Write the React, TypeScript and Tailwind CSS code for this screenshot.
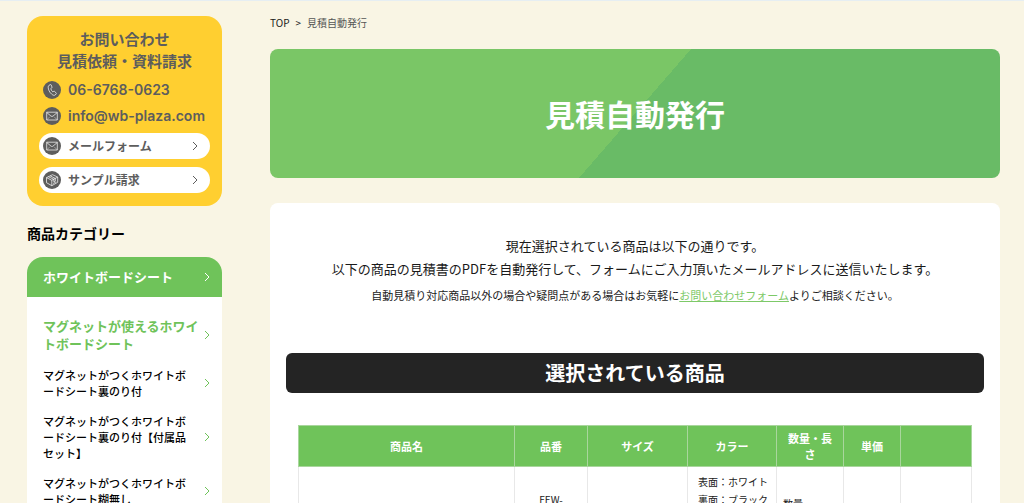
import type { ReactNode } from 'react';

const categories = [
  'マグネットがつくホワイトボードシート裏のり付',
  'マグネットがつくホワイトボードシート裏のり付【付属品セット】',
  'マグネットがつくホワイトボードシート糊無し',
];

const columns = [
  { label: '商品名', width: 'w-auto' },
  { label: '品番', width: 'w-[73px]' },
  { label: 'サイズ', width: 'w-[100px]' },
  { label: 'カラー', width: 'w-[89px]' },
  { label: '数量・長さ', width: 'w-[67px]' },
  { label: '単価', width: 'w-[57px]' },
  { label: '', width: 'w-[71px]' },
];

function Chevron({ className }: { className: string }) {
  return (
    <svg viewBox="0 0 6 10" className={`shrink-0 ${className}`} fill="none" stroke="currentColor" aria-hidden="true">
      <path d="M1 1l4 4-4 4" />
    </svg>
  );
}

function RoundIcon({ children }: { children: ReactNode }) {
  return (
    <svg viewBox="0 0 18 18" className="size-[18px] shrink-0" fill="none" stroke="#fff" strokeWidth="0.7" strokeLinejoin="round" aria-hidden="true">
      <circle cx="9" cy="9" r="9" fill="#5d5d5d" stroke="none" />
      {children}
    </svg>
  );
}

function PhoneIcon() {
  return (
    <RoundIcon>
      <path d="M6 4.3l1.400-.7c.4-.2.7 0 .8.300l.8 2.200c.1.400 0 .600-.3.800l-.9.600c.2 1.400.9 2.500 2 3.400l1-.6c.3-.2.600-.1.800.1l1.600 1.700c.2.200.2.500 0 .700l-1 1.200c-.8.700-2.200.300-3.500-.8-2.100-1.800-3.500-4.500-3.500-7 0-.9.200-1.500.8-1.900z" />
    </RoundIcon>
  );
}

function MailIcon() {
  return (
    <RoundIcon>
      <rect x="3.700" y="5.200" width="10.600" height="7.800" />
      <path d="M3.700 5.500l4.300 3.600c.6.500 1.400.5 2 0l4.300-3.600" />
      <path d="M4 12.700l2.800-2.900M14 12.700l-2.800-2.900" strokeWidth="0.4" />
    </RoundIcon>
  );
}

function BoxIcon() {
  return (
    <RoundIcon>
      <path d="M3.500 6.600L9.500 3.700l5.200 2.400v5.200l-5.900 3.400-5.300-3z" />
      <path d="M3.500 6.600l5.300 2.700 5.900-3.200M8.800 9.300v5.400M5.400 5.700l5.400 2.600v2.500l1.500-.8V7.400L7.200 4.900M10.200 12.500l3-1.700" />
    </RoundIcon>
  );
}

function ContactCard() {
  return (
    <section className="flex flex-col gap-2 rounded-2xl bg-[#ffcf30] px-3 pt-3 pb-[13px] font-bold text-[#5d5d5d]">
      <h2 className="pb-px text-center text-[15px] leading-[22px]">
        お問い合わせ
        <br />
        見積依頼・資料請求
      </h2>
      <a href="tel:06-6768-0623" className="flex items-center gap-[7px] px-1 font-[Inter,sans-serif] text-[14px] leading-[18px] font-semibold">
        <PhoneIcon />
        06-6768-0623
      </a>
      <a href="mailto:info@wb-plaza.com" className="flex items-center gap-[7px] px-1 font-[Inter,sans-serif] text-[14px] leading-[18px] font-semibold">
        <MailIcon />
        info@wb-plaza.com
      </a>
      <a href="#form" className="flex items-center gap-[7px] rounded-full bg-white py-1 pr-3 pl-1 text-[12px] leading-[18px]">
        <MailIcon />
        <span className="flex-1">メールフォーム</span>
        <Chevron className="h-[10px] w-[6px]" />
      </a>
      <a href="#sample" className="flex items-center gap-[7px] rounded-full bg-white py-1 pr-3 pl-1 text-[12px] leading-[18px]">
        <BoxIcon />
        <span className="flex-1">サンプル請求</span>
        <Chevron className="h-[10px] w-[6px]" />
      </a>
    </section>
  );
}

function CategoryNav() {
  return (
    <nav aria-labelledby="category-title">
      <h2 id="category-title" className="mt-4 mb-[13px] text-[14px] leading-[22px] font-bold text-black">
        商品カテゴリー
      </h2>
      <a href="#sheet" className="flex h-10 items-center justify-between rounded-t-2xl bg-[#6fc35a] pr-3 pl-4 text-[13px] font-bold text-white">
        ホワイトボードシート
        <Chevron className="h-[10px] w-[6px]" />
      </a>
      <ul className="flex flex-col gap-[14px] bg-white pt-5 pr-3 pb-6 pl-4">
        <li>
          <a href="#magnet" className="flex items-center justify-between text-[13px] leading-[18px] font-bold text-[#6fc35a]">
            <span className="w-[158px]">マグネットが使えるホワイトボードシート</span>
            <Chevron className="h-[10px] w-[6px]" />
          </a>
        </li>
        {categories.map((name) => (
          <li key={name}>
            <a href="#category" className="flex items-center justify-between text-[11px] leading-4 font-medium text-black">
              <span className="w-[148px] break-all">{name}</span>
              <Chevron className="h-[10px] w-[6px] text-[#6fc35a]" />
            </a>
          </li>
        ))}
      </ul>
    </nav>
  );
}

function ProductTable() {
  return (
    <table className="w-full table-fixed border-collapse text-[10px] leading-[18px]">
      <thead>
        <tr className="h-10 bg-[#6fc35a] text-[11px] leading-4 text-white">
          {columns.map((col) => (
            <th key={col.label} className={`${col.width} border border-[#a9d69d] px-2 py-1 font-bold`}>
              {col.label}
            </th>
          ))}
        </tr>
      </thead>
      <tbody>
        <tr className="h-[84px]">
          <td className="border border-[#e8e8e8]" />
          <td className="border border-[#e8e8e8] px-2 pt-6 text-center align-top">FEW-</td>
          <td className="border border-[#e8e8e8]" />
          <td className="border border-[#e8e8e8] py-[6px] pl-[10px] align-top whitespace-nowrap">
            表面：ホワイト
            <br />
            裏面：ブラック
          </td>
          <td className="border border-[#e8e8e8] px-[6px] pt-7 align-top">数量</td>
          <td className="border border-[#e8e8e8]" />
          <td className="border border-[#e8e8e8]" />
        </tr>
      </tbody>
    </table>
  );
}

export default function App() {
  return (
    <div
      lang="ja"
      className="flex min-h-screen items-start gap-12 border-t border-[#e6eef2] bg-[#f9f5e4] pr-6 pl-[27px] font-['Noto_Sans_CJK_JP',sans-serif] text-[#1a1a1a]"
    >
      <aside className="w-[195px] shrink-0 pt-[15px]">
        <ContactCard />
        <CategoryNav />
      </aside>

      <main className="min-w-0 flex-1 pt-[13px]">
        {/* Breadcrumb */}
        <nav aria-label="パンくず" className="flex gap-[6px] text-[10px] leading-[18px]">
          <a href="#top">TOP</a>
          <span>&gt;</span>
          <span className="text-[#555]">見積自動発行</span>
        </nav>

        <div className="mt-[17px] flex h-[129px] items-center justify-center rounded-lg bg-[linear-gradient(131deg,#7ac666_50%,#69bb66_50%)]">
          <h1 className="text-[30px] font-bold text-white">見積自動発行</h1>
        </div>

        <section className="mt-[25px] rounded-lg bg-white px-4 pt-[31px] pb-6">
          <p className="text-center text-[13px] leading-[23px]">
            現在選択されている商品は以下の通りです。
            <br />
            以下の商品の見積書のPDFを自動発行して、フォームにご入力頂いたメールアドレスに送信いたします。
          </p>
          <p className="mt-[6px] text-center text-[11px] leading-[18px]">
            自動見積り対応商品以外の場合や疑問点がある場合はお気軽に
            <a href="#contact" className="text-[#7dc968] underline">
              お問い合わせフォーム
            </a>
            よりご相談ください。
          </p>
          <h2 className="mt-[49px] rounded-md bg-[#242424] text-center text-[20px] leading-10 font-bold text-white">
            選択されている商品
          </h2>
          <div className="mt-8 px-3">
            <ProductTable />
          </div>
        </section>
      </main>
    </div>
  );
}
